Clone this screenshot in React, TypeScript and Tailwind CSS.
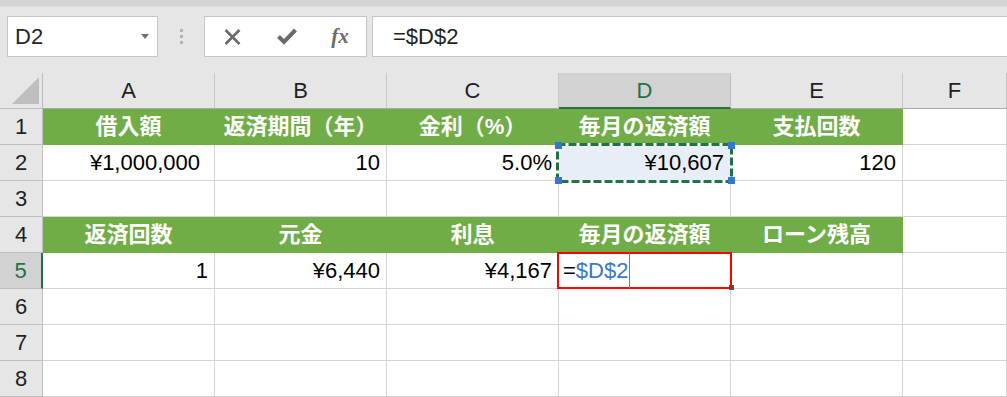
import type { ReactNode } from 'react';

type Cell = { text?: ReactNode; kind?: 'head' | 'num'; extra?: string };

const COLS = ['A', 'B', 'C', 'D', 'E', 'F'];

const h = (text: string): Cell => ({ text, kind: 'head' });
const n = (text: string, extra = ''): Cell => ({ text, kind: 'num', extra });
const e: Cell = {};

// Sheet contents, row by row (A..F).
const ROWS: Cell[][] = [
  [h('借入額'), h('返済期間（年）'), h('金利（%）'), h('毎月の返済額'), h('支払回数'), e],
  [n('¥1,000,000', 'pr-[14px]'), n('10'), n('5.0%'), n('¥10,607', 'bg-[#e8eef8]'), n('120'), e],
  [e, e, e, e, e, e],
  [h('返済回数'), h('元金'), h('利息'), h('毎月の返済額'), h('ローン残高'), e],
  [n('1'), n('¥6,440'), n('¥4,167'), e, e, e],
  [e, e, e, e, e, e],
  [e, e, e, e, e, e],
  [e, e, e, e, e, e],
];

const GRID = 'grid grid-cols-[43px_172px_172px_172px_172px_172px_1fr]';

function FormulaBar() {
  return (
    <div className="flex items-start h-[66px] pt-[9px] pl-[7px] bg-[#e6e6e6]">
      <div className="flex items-center justify-between w-[151px] h-[41px] bg-white border border-[#c6c6c6] pl-[7px] pr-[8px]">
        <span className="text-[22px] text-[#262626]">D2</span>
        <svg width="8" height="5" viewBox="0 0 8 5">
          <polygon points="0,0 8,0 4,5" fill="#6f6f6f" />
        </svg>
      </div>
      <div className="flex flex-col items-center justify-center gap-[3px] w-[46px] h-[41px]">
        <span className="w-[3px] h-[3px] bg-[#b4b4b4]" />
        <span className="w-[3px] h-[3px] bg-[#b4b4b4]" />
        <span className="w-[3px] h-[3px] bg-[#b4b4b4]" />
      </div>
      <div className="flex items-center w-[163px] h-[41px] bg-white border border-[#c6c6c6]">
        <div className="flex justify-center w-[54px]">
          <svg width="17" height="16" viewBox="0 0 17 16">
            <path d="M1.5 1 L15.5 15 M15.5 1 L1.5 15" stroke="#6b6b6b" strokeWidth="2.6" />
          </svg>
        </div>
        <div className="flex justify-center w-[56px]">
          <svg width="20" height="17" viewBox="0 0 20 17">
            <path d="M1.5 8.5 L7 14 L18.5 2" stroke="#6b6b6b" strokeWidth="4" fill="none" />
          </svg>
        </div>
        <div className="flex justify-center w-[50px]">
          <span className="font-['Liberation_Serif',serif] italic font-bold text-[21px] text-[#6b6b6b] leading-none">
            fx
          </span>
        </div>
      </div>
      <div className="flex items-center flex-1 h-[41px] ml-[5px] bg-white border border-r-0 border-[#c6c6c6] pl-[20px]">
        <span className="text-[22px] text-[#1f1f1f]">=$D$2</span>
      </div>
    </div>
  );
}

function ColumnHeaders() {
  return (
    <div className={`${GRID} h-9`}>
      <div className="flex items-end justify-end pr-[3px] pb-[4px] bg-[#e6e6e6] border-r border-b border-[#bdbdbd]">
        <svg width="27" height="27" viewBox="0 0 27 27">
          <polygon points="27,0 27,27 0,27" fill="#bfbfbf" />
        </svg>
      </div>
      {COLS.map((c) =>
        c === 'D' ? (
          <div
            key={c}
            className="flex items-center justify-center bg-[#d2d2d2] border-r border-[#bdbdbd] border-b-2 border-b-[#217346] text-[22px] text-[#217346]"
          >
            {c}
          </div>
        ) : (
          <div
            key={c}
            className="flex items-center justify-center bg-[#e6e6e6] border-r border-b border-[#c8c8c8] border-b-[#a8a8a8] text-[22px] text-[#1f1f1f]"
          >
            {c}
          </div>
        ),
      )}
    </div>
  );
}

function DataRow({ index, cells }: { index: number; cells: Cell[] }) {
  const active = index === 5;
  return (
    <div className={`${GRID} h-9`}>
      <div
        className={
          active
            ? 'flex items-center justify-center bg-[#d2d2d2] border-b border-b-[#c0c0c0] border-r-2 border-r-[#217346] text-[22px] text-[#217346]'
            : 'flex items-center justify-center bg-[#e6e6e6] border-r border-b border-[#c0c0c0] text-[22px] text-[#1f1f1f]'
        }
      >
        {index}
      </div>
      {cells.map((cell, i) =>
        cell.kind === 'head' ? (
          <div
            key={i}
            className="flex items-center justify-center bg-[#70ad47] border-r border-b border-[#70ad47] text-[22px] font-bold text-white whitespace-nowrap"
          >
            {cell.text}
          </div>
        ) : (
          <div
            key={i}
            className={`flex items-center justify-end pr-[6px] border-r border-b border-[#d4d4d4] text-[22px] text-black ${cell.extra ?? ''}`}
          >
            {cell.text}
          </div>
        ),
      )}
    </div>
  );
}

function Handle({ className }: { className: string }) {
  return <div className={`absolute w-[7px] h-[7px] bg-[#3476d2] ${className}`} />;
}

export default function App() {
  return (
    <div className="w-[1007px] h-[397px] overflow-hidden bg-white font-['Liberation_Sans','Noto_Sans_CJK_JP',sans-serif]">
      <div className="h-[7px] bg-[#d4d4d4] border-b border-[#dcdcdc]" />
      <FormulaBar />
      <ColumnHeaders />
      <div className="relative">
        {ROWS.map((cells, i) => (
          <DataRow key={i} index={i + 1} cells={cells} />
        ))}

        {/* copy marquee around D2 */}
        <svg className="absolute left-[556px] top-[34px]" width="177" height="40" viewBox="0 0 177 40">
          <rect x="1.5" y="1.5" width="174" height="37" fill="none" stroke="#ffffff" strokeWidth="3" />
          <rect
            x="1.5"
            y="1.5"
            width="174"
            height="37"
            fill="none"
            stroke="#217346"
            strokeWidth="3"
            strokeDasharray="8 3"
          />
        </svg>
        <Handle className="left-[555px] top-[33px]" />
        <Handle className="left-[728px] top-[33px]" />
        <Handle className="left-[555px] top-[68px]" />
        <Handle className="left-[728px] top-[68px]" />

        {/* editing cell D5 */}
        <div className="absolute left-[729px] top-[176px] w-[5px] h-[5px] bg-[#217346]" />
        <div className="absolute left-[557px] top-[143px] w-[175px] h-[37px] border-[2.5px] border-[#ff0000] flex items-center pl-[4px] text-[22px]">
          <span className="text-black">=</span>
          <span className="text-[#3a78c9]">$D$2</span>
          <span className="ml-[1px] w-px h-[36px] bg-[#7a7a7a]" />
        </div>
      </div>
    </div>
  );
}
